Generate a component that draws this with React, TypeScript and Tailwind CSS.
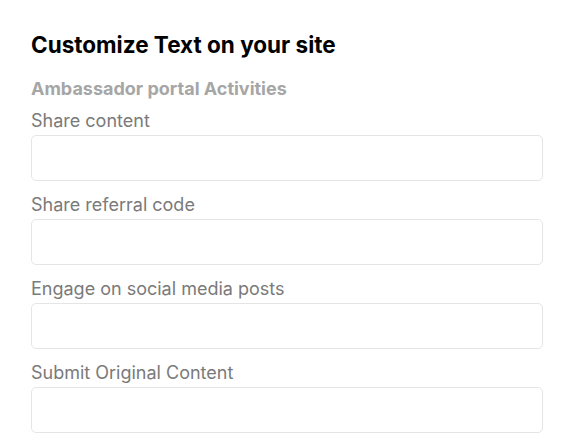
import { useState } from "react";

const activities = [
  "Share content",
  "Share referral code",
  "Engage on social media posts",
  "Submit Original Content",
];

export default function App() {
  const [values, setValues] = useState<string[]>(activities.map(() => ""));

  return (
    <div
      className="min-h-screen bg-white pl-[31px] pr-[29px] pt-[31px]"
      style={{ fontFamily: "Inter, 'Noto Sans', sans-serif" }}
    >
      <h1 className="text-[22.5px] leading-[28px] font-bold text-black">
        Customize Text on your site
      </h1>
      <h2 className="mt-[18px] text-[18px] leading-[24px] font-bold text-[#a6a6a6]">
        Ambassador portal Activities
      </h2>
      <div className="mt-[8px] flex flex-col gap-[12px]">
        {activities.map((label, i) => (
          <div key={label} className="flex flex-col gap-[2px]">
            <label className="text-[18px] leading-[24px] text-[#7a7a7a]">
              {label}
            </label>
            <input
              value={values[i]}
              onChange={(e) =>
                setValues((prev) =>
                  prev.map((v, j) => (j === i ? e.target.value : v))
                )
              }
              className="h-[46px] w-full rounded-[5px] border border-[#e5e5e5] bg-white px-3 text-[16px] text-[#333] focus:outline-none"
            />
          </div>
        ))}
      </div>
    </div>
  );
}
